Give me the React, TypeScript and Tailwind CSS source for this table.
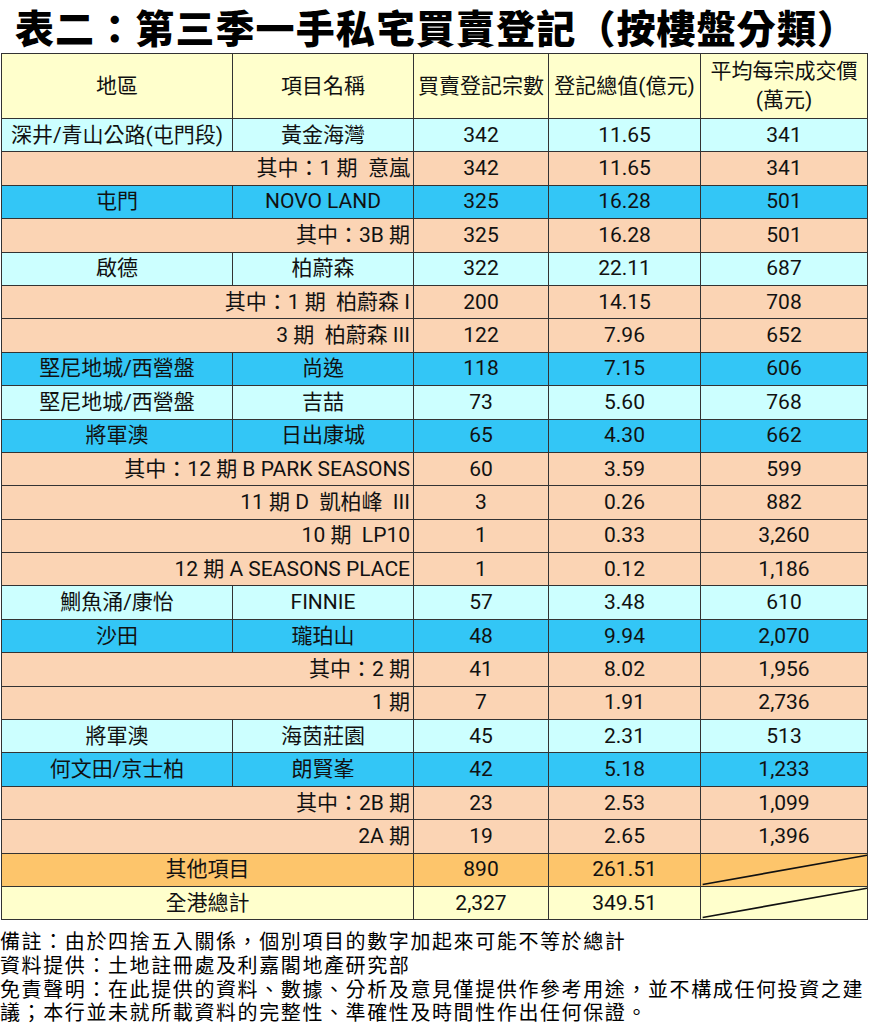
type MainRow = {
  kind: "main"
  region: string
  name: string
  count: string
  value: string
  avg: string
  bg: string
}

type SubRow = {
  kind: "sub"
  label: string
  count: string
  value: string
  avg: string
}

type TotalRow = {
  kind: "total"
  label: string
  count: string
  value: string
  bg: string
}

const cyan = "bg-[#ccffff]"
const blue = "bg-[#33c6f6]"

const rows: (MainRow | SubRow | TotalRow)[] = [
  { kind: "main", region: "深井/青山公路(屯門段)", name: "黃金海灣", count: "342", value: "11.65", avg: "341", bg: cyan },
  { kind: "sub", label: "其中：1 期  意嵐", count: "342", value: "11.65", avg: "341" },
  { kind: "main", region: "屯門", name: "NOVO LAND", count: "325", value: "16.28", avg: "501", bg: blue },
  { kind: "sub", label: "其中：3B 期", count: "325", value: "16.28", avg: "501" },
  { kind: "main", region: "啟德", name: "柏蔚森", count: "322", value: "22.11", avg: "687", bg: cyan },
  { kind: "sub", label: "其中：1 期  柏蔚森 I", count: "200", value: "14.15", avg: "708" },
  { kind: "sub", label: "3 期  柏蔚森 III", count: "122", value: "7.96", avg: "652" },
  { kind: "main", region: "堅尼地城/西營盤", name: "尚逸", count: "118", value: "7.15", avg: "606", bg: blue },
  { kind: "main", region: "堅尼地城/西營盤", name: "吉喆", count: "73", value: "5.60", avg: "768", bg: cyan },
  { kind: "main", region: "將軍澳", name: "日出康城", count: "65", value: "4.30", avg: "662", bg: blue },
  { kind: "sub", label: "其中：12 期 B PARK SEASONS", count: "60", value: "3.59", avg: "599" },
  { kind: "sub", label: "11 期 D  凱柏峰  III", count: "3", value: "0.26", avg: "882" },
  { kind: "sub", label: "10 期  LP10", count: "1", value: "0.33", avg: "3,260" },
  { kind: "sub", label: "12 期 A SEASONS PLACE", count: "1", value: "0.12", avg: "1,186" },
  { kind: "main", region: "鰂魚涌/康怡", name: "FINNIE", count: "57", value: "3.48", avg: "610", bg: cyan },
  { kind: "main", region: "沙田", name: "瓏珀山", count: "48", value: "9.94", avg: "2,070", bg: blue },
  { kind: "sub", label: "其中：2 期", count: "41", value: "8.02", avg: "1,956" },
  { kind: "sub", label: "1 期", count: "7", value: "1.91", avg: "2,736" },
  { kind: "main", region: "將軍澳", name: "海茵莊園", count: "45", value: "2.31", avg: "513", bg: cyan },
  { kind: "main", region: "何文田/京士柏", name: "朗賢峯", count: "42", value: "5.18", avg: "1,233", bg: blue },
  { kind: "sub", label: "其中：2B 期", count: "23", value: "2.53", avg: "1,099" },
  { kind: "sub", label: "2A 期", count: "19", value: "2.65", avg: "1,396" },
  { kind: "total", label: "其他項目", count: "890", value: "261.51", bg: "bg-[#fdc56b]" },
  { kind: "total", label: "全港總計", count: "2,327", value: "349.51", bg: "bg-[#ffffcc]" },
]

const td = "border border-[#333] text-center p-0"

function Slash() {
  return (
    <svg className="absolute inset-0 h-full w-full" preserveAspectRatio="none" viewBox="0 0 100 100">
      <line x1="1" y1="94" x2="100" y2="4" stroke="#111" strokeWidth="1.6" vectorEffect="non-scaling-stroke" />
    </svg>
  )
}

export default function App() {
  return (
    <div className="w-[871px] bg-white text-[#111]">
      <div className="flex h-[53px] items-center pl-[15px] font-[family-name:'Noto_Sans_CJK_TC',sans-serif] text-[39px] font-black leading-none tracking-[1.1px] text-black">
        表二：第三季一手私宅買賣登記（按樓盤分類）
      </div>

      <table className="ml-[1px] w-[866px] table-fixed border-collapse font-[family-name:'Roboto','Noto_Sans_CJK_TC',sans-serif] text-[21px] leading-none">
        <colgroup>
          <col className="w-[231px]" />
          <col className="w-[181px]" />
          <col className="w-[135px]" />
          <col className="w-[152px]" />
          <col className="w-[167px]" />
        </colgroup>
        <thead>
          <tr className="h-[65px] bg-[#ffffcc]">
            <th className={`${td} font-normal`}>地區</th>
            <th className={`${td} font-normal`}>項目名稱</th>
            <th className={`${td} font-normal whitespace-nowrap`}>買賣登記宗數</th>
            <th className={`${td} font-normal whitespace-nowrap`}>登記總值(億元)</th>
            <th className={`${td} font-normal leading-[29px]`}>
              平均每宗成交價
              <br />
              (萬元)
            </th>
          </tr>
        </thead>
        <tbody>
          {rows.map((r, i) => {
            if (r.kind === "main") {
              return (
                <tr key={i} className={`h-[33.4px] ${r.bg}`}>
                  <td className={`${td} whitespace-nowrap`}>{r.region}</td>
                  <td className={td}>{r.name}</td>
                  <td className={td}>{r.count}</td>
                  <td className={td}>{r.value}</td>
                  <td className={td}>{r.avg}</td>
                </tr>
              )
            }
            if (r.kind === "sub") {
              return (
                <tr key={i} className="h-[33.4px] bg-[#fbd4b4]">
                  <td colSpan={2} className="border border-[#333] p-0 pr-[3px] text-right whitespace-pre">
                    {r.label}
                  </td>
                  <td className={td}>{r.count}</td>
                  <td className={td}>{r.value}</td>
                  <td className={td}>{r.avg}</td>
                </tr>
              )
            }
            return (
              <tr key={i} className={`h-[33.4px] ${r.bg}`}>
                <td colSpan={2} className={td}>
                  {r.label}
                </td>
                <td className={td}>{r.count}</td>
                <td className={td}>{r.value}</td>
                <td className={`${td} relative`}>
                  <Slash />
                </td>
              </tr>
            )
          })}
        </tbody>
      </table>

      <div className="pt-[9px] font-[family-name:'Noto_Sans_CJK_TC',sans-serif] text-[20px] leading-[23.7px] tracking-[1.6px] whitespace-nowrap text-black">
        <div>備註：由於四捨五入關係，個別項目的數字加起來可能不等於總計</div>
        <div>資料提供：土地註冊處及利嘉閣地產研究部</div>
        <div>免責聲明：在此提供的資料、數據、分析及意見僅提供作參考用途，並不構成任何投資之建</div>
        <div>議；本行並未就所載資料的完整性、準確性及時間性作出任何保證。</div>
      </div>
    </div>
  )
}
